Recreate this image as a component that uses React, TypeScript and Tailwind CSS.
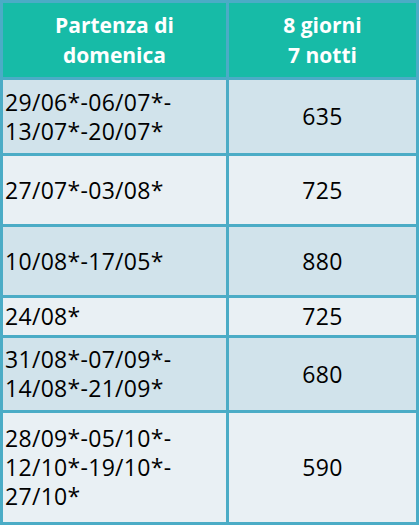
import React from 'react';

type Row = { dates: string[]; price: string; h: string; bg: string };

const rows: Row[] = [
  { dates: ['29/06*-06/07*-', '13/07*-20/07*'], price: '635', h: 'h-[73px]', bg: 'bg-[#d1e3eb]' },
  { dates: ['27/07*-03/08*'], price: '725', h: 'h-[68px]', bg: 'bg-[#e9f0f4]' },
  { dates: ['10/08*-17/05*'], price: '880', h: 'h-[68px]', bg: 'bg-[#d1e3eb]' },
  { dates: ['24/08*'], price: '725', h: 'h-[37px]', bg: 'bg-[#e9f0f4]' },
  { dates: ['31/08*-07/09*-', '14/08*-21/09*'], price: '680', h: 'h-[72px]', bg: 'bg-[#d1e3eb]' },
  { dates: ['28/09*-05/10*-', '12/10*-19/10*-', '27/10*'], price: '590', h: 'h-[109px]', bg: 'bg-[#e9f0f4]' },
];

export default function App() {
  return (
    <div className="w-[420px] h-[532px] bg-white" style={{ fontFamily: '"Open Sans", "Noto Sans", sans-serif' }}>
      <div className="w-[419px] grid grid-cols-[223px_187px] gap-[3px] p-[3px] bg-[#4bacc6]">
        {/* header */}
        <div className="h-[74px] bg-[#17bba7] flex flex-col items-center justify-center text-white font-bold text-[21px] leading-[30px]">
          <span>Partenza di</span>
          <span>domenica</span>
        </div>
        <div className="h-[74px] bg-[#17bba7] flex flex-col items-center justify-center text-white font-bold text-[21px] leading-[30px]">
          <span>8 giorni</span>
          <span>7 notti</span>
        </div>

        {rows.map((r, i) => (
          <React.Fragment key={i}>
            <div className={`${r.h} ${r.bg} flex flex-col justify-center pl-[2px] text-black text-[23px] leading-[29px] tracking-[0.3px]`}>
              {r.dates.map((d) => (
                <span key={d}>{d}</span>
              ))}
            </div>
            <div className={`${r.h} ${r.bg} flex items-center justify-center text-black text-[23px] leading-[29px] tracking-[0.3px]`}>
              {r.price}
            </div>
          </React.Fragment>
        ))}
      </div>
    </div>
  );
}
